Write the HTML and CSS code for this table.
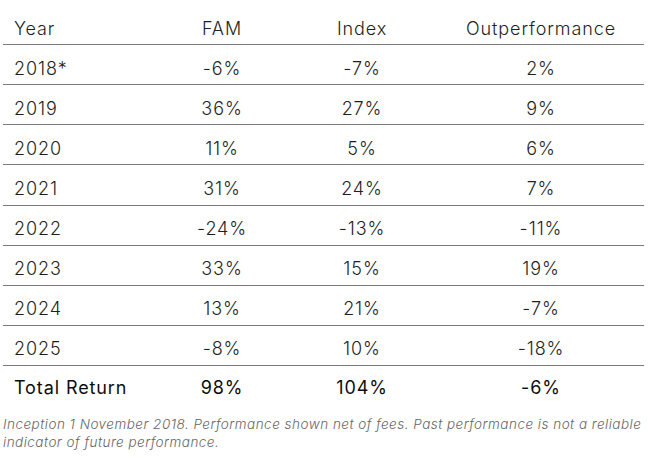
FILE: index.html
```html
<!DOCTYPE html>
<html>
<head>
<meta charset="utf-8">
<link rel="stylesheet" href="styles.css">
</head>
<body>
<div class="perf">
  <div class="row head">
    <div class="c year">Year</div>
    <div class="c">FAM</div>
    <div class="c">Index</div>
    <div class="c">Outperformance</div>
  </div>
  <div class="row"><div class="c year">2018*</div><div class="c">-6%</div><div class="c">-7%</div><div class="c">2%</div></div>
  <div class="row"><div class="c year">2019</div><div class="c">36%</div><div class="c">27%</div><div class="c">9%</div></div>
  <div class="row"><div class="c year">2020</div><div class="c">11%</div><div class="c">5%</div><div class="c">6%</div></div>
  <div class="row"><div class="c year">2021</div><div class="c">31%</div><div class="c">24%</div><div class="c">7%</div></div>
  <div class="row"><div class="c year">2022</div><div class="c">-24%</div><div class="c">-13%</div><div class="c">-11%</div></div>
  <div class="row"><div class="c year">2023</div><div class="c">33%</div><div class="c">15%</div><div class="c">19%</div></div>
  <div class="row"><div class="c year">2024</div><div class="c">13%</div><div class="c">21%</div><div class="c">-7%</div></div>
  <div class="row"><div class="c year">2025</div><div class="c">-8%</div><div class="c">10%</div><div class="c">-18%</div></div>
  <div class="row total"><div class="c year">Total Return</div><div class="c">98%</div><div class="c">104%</div><div class="c">-6%</div></div>
  <p class="note">Inception 1 November 2018. Performance shown net of fees. Past performance is not a reliable indicator of future performance.</p>
</div>
</body>
</html>
```

FILE: styles.css
```css
html, body {
  margin: 0;
  padding: 0;
  background: #ffffff;
}
.perf {
  margin-left: 3px;
  width: 641px;
  font-family: Inter, "Liberation Sans", sans-serif;
  color: #1f1f1f;
}
.row {
  display: grid;
  grid-template-columns: 155px 128px 152px 206px;
  height: 40.15px;
  box-sizing: border-box;
  border-bottom: 1px solid #7a7a7a;
  font-size: 18px;
  line-height: 22px;
  font-weight: 300;
  letter-spacing: 0.9px;
  padding-top: 12.5px;
}
.row.head {
  height: 45px;
  padding-top: 17.5px;
}
.row.total {
  border-bottom: none;
  padding-top: 11px;
  color: #0d0d0d;
  font-weight: 400;
}
.c {
  text-align: center;
  white-space: nowrap;
}
.c.year {
  text-align: left;
  padding-left: 11px;
}
.note {
  margin: 10px 0 0 0;
  font-size: 13.5px;
  line-height: 17.5px;
  font-style: italic;
  font-weight: 300;
  letter-spacing: 0.48px;
  color: #666666;
}
```
